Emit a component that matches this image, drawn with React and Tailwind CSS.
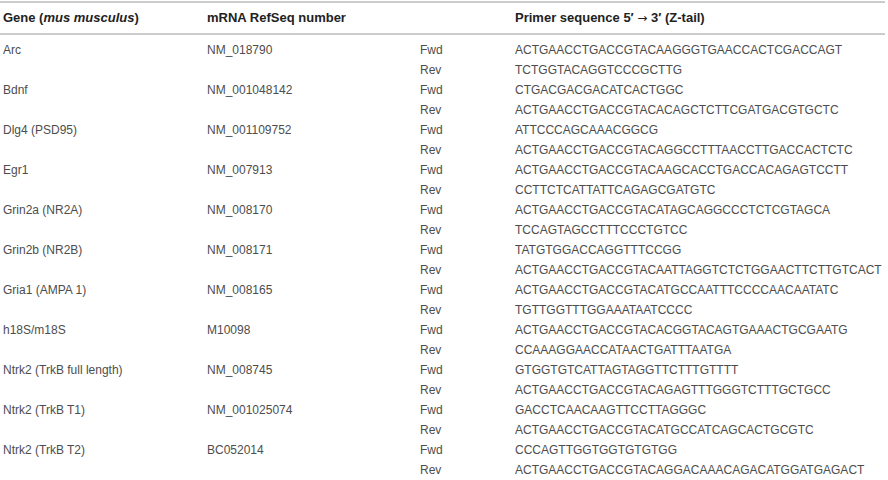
import React from 'react';

const rows = [
  { gene: 'Arc', ref: 'NM_018790', fwd: 'ACTGAACCTGACCGTACAAGGGTGAACCACTCGACCAGT', rev: 'TCTGGTACAGGTCCCGCTTG' },
  { gene: 'Bdnf', ref: 'NM_001048142', fwd: 'CTGACGACGACATCACTGGC', rev: 'ACTGAACCTGACCGTACACAGCTCTTCGATGACGTGCTC' },
  { gene: 'Dlg4 (PSD95)', ref: 'NM_001109752', fwd: 'ATTCCCAGCAAACGGCG', rev: 'ACTGAACCTGACCGTACAGGCCTTTAACCTTGACCACTCTC' },
  { gene: 'Egr1', ref: 'NM_007913', fwd: 'ACTGAACCTGACCGTACAAGCACCTGACCACAGAGTCCTT', rev: 'CCTTCTCATTATTCAGAGCGATGTC' },
  { gene: 'Grin2a (NR2A)', ref: 'NM_008170', fwd: 'ACTGAACCTGACCGTACATAGCAGGCCCTCTCGTAGCA', rev: 'TCCAGTAGCCTTTCCCTGTCC' },
  { gene: 'Grin2b (NR2B)', ref: 'NM_008171', fwd: 'TATGTGGACCAGGTTTCCGG', rev: 'ACTGAACCTGACCGTACAATTAGGTCTCTGGAACTTCTTGTCACT' },
  { gene: 'Gria1 (AMPA 1)', ref: 'NM_008165', fwd: 'ACTGAACCTGACCGTACATGCCAATTTCCCCAACAATATC', rev: 'TGTTGGTTTGGAAATAATCCCC' },
  { gene: 'h18S/m18S', ref: 'M10098', fwd: 'ACTGAACCTGACCGTACACGGTACAGTGAAACTGCGAATG', rev: 'CCAAAGGAACCATAACTGATTTAATGA' },
  { gene: 'Ntrk2 (TrkB full length)', ref: 'NM_008745', fwd: 'GTGGTGTCATTAGTAGGTTCTTTGTTTT', rev: 'ACTGAACCTGACCGTACAGAGTTTGGGTCTTTGCTGCC' },
  { gene: 'Ntrk2 (TrkB T1)', ref: 'NM_001025074', fwd: 'GACCTCAACAAGTTCCTTAGGGC', rev: 'ACTGAACCTGACCGTACATGCCATCAGCACTGCGTC' },
  { gene: 'Ntrk2 (TrkB T2)', ref: 'BC052014', fwd: 'CCCAGTTGGTGGTGTGTGG', rev: 'ACTGAACCTGACCGTACAGGACAAACAGACATGGATGAGACT' },
];

const cols = 'grid grid-cols-[207px_213px_95px_1fr]';

export default function App() {
  return (
    <div className="w-[888px] h-[480px] bg-white overflow-hidden font-['Liberation_Sans',Arial,sans-serif] text-[12px]">
      <div className="w-[885px] mt-[1px] border-t-2 border-b-2 border-[#cccccc]">
        <div className={`${cols} h-[30px] items-center font-bold text-[13px] text-[#222]`}>
          <div className="pl-[3px]">
            Gene (<span className="italic">mus musculus</span>)
          </div>
          <div>mRNA RefSeq number</div>
          <div></div>
          <div>
            Primer sequence 5′ <span className="font-['DejaVu_Sans'] font-normal text-[12px]">→</span> 3′ (Z-tail)
          </div>
        </div>
      </div>
      <div className="pt-[5px] text-[#4d4d4d]">
        {rows.map((r) => (
          <div key={r.gene}>
            <div className={`${cols} h-[20px] items-center`}>
              <div className="pl-[3px]">{r.gene}</div>
              <div>{r.ref}</div>
              <div>Fwd</div>
              <div>{r.fwd}</div>
            </div>
            <div className={`${cols} h-[20px] items-center`}>
              <div></div>
              <div></div>
              <div>Rev</div>
              <div>{r.rev}</div>
            </div>
          </div>
        ))}
      </div>
    </div>
  );
}
